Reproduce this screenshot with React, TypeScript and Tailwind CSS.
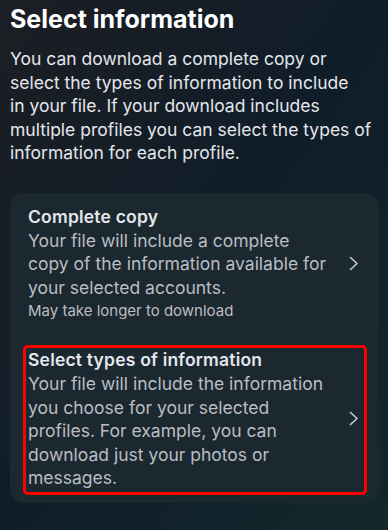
const font = { fontFamily: 'Inter, "Noto Sans", sans-serif' }

function Chevron() {
  return (
    <svg width="10" height="15" viewBox="0 0 10 15" fill="none" className="shrink-0">
      <path d="M1.5 1.5 L8 7.5 L1.5 13.5" stroke="#c9ccd1" strokeWidth="1.6" strokeLinecap="round" strokeLinejoin="round" />
    </svg>
  )
}

function Option({
  title,
  lines,
  note,
  selected,
}: {
  title: string
  lines: string[]
  note?: string
  selected?: boolean
}) {
  return (
    <div
      className={
        'flex items-center rounded-[5px] border-[3px] pl-[2px] pr-[5px] pb-[2px] ' +
        (selected ? 'border-[#ff0000]' : 'border-transparent')
      }
    >
      <div className="flex-1">
        <div className="text-[17.5px] leading-[24px] font-semibold tracking-[0.2px] text-[#e4e6eb]">{title}</div>
        {lines.map((l) => (
          <div key={l} className="text-[17.5px] leading-[23.5px] text-[#babdc2] whitespace-nowrap">
            {l}
          </div>
        ))}
        {note && <div className="text-[15px] leading-[24px] text-[#babdc2]">{note}</div>}
      </div>
      <Chevron />
    </div>
  )
}

const intro = [
  'You can download a complete copy or',
  'select the types of information to include',
  'in your file. If your download includes',
  'multiple profiles you can select the types of',
  'information for each profile.',
]

export default function App() {
  return (
    <div
      className="min-h-screen w-full bg-gradient-to-br from-[#1c1e23] via-[#0f1d29] to-[#13282b] pl-[10px] pr-[9px] pt-[2px] pb-[27px]"
      style={font}
    >
      <h1 className="text-[25px] leading-[34px] font-bold text-white">Select information</h1>
      <p className="mt-[11px] text-[17.5px] leading-[23.5px] text-[#e4e6eb]">
        {intro.map((l) => (
          <span key={l} className="block whitespace-nowrap">
            {l}
          </span>
        ))}
      </p>
      <div className="mt-[28px] rounded-[14px] bg-[#1c2830] pl-[13px] pr-[12px] pt-[9px] pb-[8px] flex flex-col gap-[17px]">
        <Option
          title="Complete copy"
          lines={['Your file will include a complete', 'copy of the information available for', 'your selected accounts.']}
          note="May take longer to download"
        />
        <Option
          title="Select types of information"
          lines={[
            'Your file will include the information',
            'you choose for your selected',
            'profiles. For example, you can',
            'download just your photos or',
            'messages.',
          ]}
          selected
        />
      </div>
    </div>
  )
}
